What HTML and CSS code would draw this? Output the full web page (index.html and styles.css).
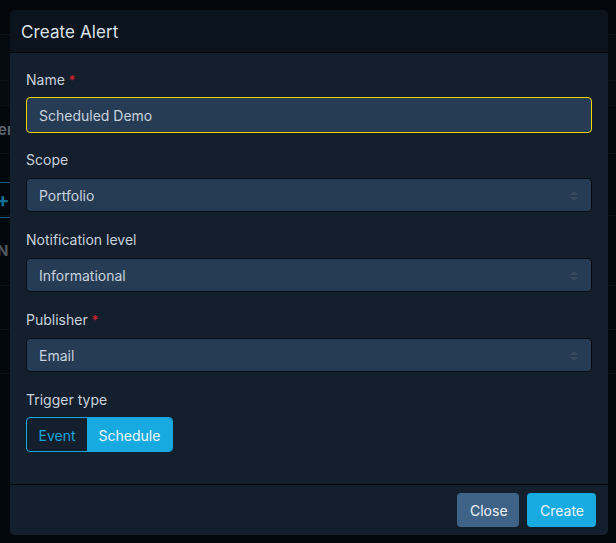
FILE: index.html
```html
<!DOCTYPE html>
<html>
<head>
<meta charset="utf-8">
<link rel="stylesheet" href="styles.css">
</head>
<body>
<div class="page">
  <div class="bg-row bg-top"></div>
  <div class="bg-row bg-nav"></div>
  <div class="bg-row bg-sub"></div>
  <div class="bg-row bg-title"><span class="bg-text">Filter</span></div>
  <div class="bg-row bg-tabs"><span class="bg-plus">+</span></div>
  <div class="bg-row bg-col"><span class="bg-n">N</span></div>
  <div class="bg-row bg-line"></div>
  <div class="bg-row bg-line"></div>
</div>

<div class="modal">
  <div class="modal-header">Create Alert</div>
  <div class="modal-body">
    <div class="field">
      <label class="label">Name <span class="req">*</span></label>
      <div class="input focused">Scheduled Demo</div>
    </div>
    <div class="field">
      <label class="label">Scope</label>
      <div class="input select">Portfolio<span class="arrows"></span></div>
    </div>
    <div class="field">
      <label class="label">Notification level</label>
      <div class="input select">Informational<span class="arrows"></span></div>
    </div>
    <div class="field">
      <label class="label">Publisher <span class="req">*</span></label>
      <div class="input select">Email<span class="arrows"></span></div>
    </div>
    <div class="field">
      <label class="label">Trigger type</label>
      <div class="toggle">
        <span class="seg">Event</span>
        <span class="seg active">Schedule</span>
      </div>
    </div>
  </div>
  <div class="modal-footer">
    <button class="btn btn-close">Close</button>
    <button class="btn btn-create">Create</button>
  </div>
</div>
</body>
</html>
```

FILE: styles.css
```css
* { box-sizing: border-box; }
html, body {
  margin: 0;
  padding: 0;
  width: 616px;
  height: 543px;
  overflow: hidden;
  background: #03080e;
  font-family: Inter, "Noto Sans", "Liberation Sans", sans-serif;
}
.page {
  display: flex;
  flex-direction: column;
}
.bg-row { width: 100%; border-bottom: 1px solid #0b1118; position: relative; }
.bg-top { height: 35px; background: #03070c; }
.bg-nav { height: 46px; background: #040a10; }
.bg-sub { height: 25px; background: #060b12; }
.bg-title { height: 48px; display: flex; align-items: center; }
.bg-text {
  color: #5d6670; font-size: 15px; margin-left: -24px; font-weight: 600;
}
.bg-tabs {
  height: 62px; display: flex; align-items: center;
  border-bottom: 1px solid #0b1118;
}
.bg-tabs::before {
  content: ""; position: absolute; left: 0; top: 28px; width: 14px; height: 34px;
  border-top: 1px solid #0f5f7d; border-bottom: 1px solid #0f5f7d;
}
.bg-plus { color: #127092; font-size: 20px; font-weight: 700; margin-left: -4px; margin-top: 30px; }
.bg-col { height: 70px; display: flex; align-items: center; }
.bg-n { color: #50575f; font-weight: 700; font-size: 15px; margin-left: -3px; }
.bg-line { height: 44px; }

.modal {
  position: absolute;
  left: 10px;
  top: 10px;
  width: 598px;
  height: 525px;
  border-radius: 5px;
  overflow: hidden;
  background: #141f2e;
  display: flex;
  flex-direction: column;
}
.modal-header {
  height: 43px;
  background: #0b141d;
  border-bottom: 1px solid #04080c;
  color: #dbe3ea;
  font-size: 17px;
  line-height: 44px;
  padding-left: 11px;
  letter-spacing: 0.1px;
}
.modal-body {
  padding: 17px 16px 14px 16px;
  flex: 1;
}
.field { margin-bottom: 18px; }
.field:last-child { margin-bottom: 0; }
.label {
  display: block;
  color: #c9d2db;
  font-size: 14px;
  line-height: 20px;
  margin-bottom: 8px;
}
.req { color: #e0242c; font-size: 13px; }
.input {
  height: 34px;
  border: 1px solid #070c12;
  border-radius: 4px;
  background: #263c55;
  color: #c8d2dd;
  font-size: 14px;
  line-height: 34px;
  padding-left: 12px;
  position: relative;
}
.input.focused {
  border-color: #f2d500;
  height: 36px;
  line-height: 36px;
  margin-top: -1px;
  margin-bottom: -1px;
}
.arrows {
  position: absolute;
  right: 13px;
  top: 12px;
  width: 8px;
  height: 10px;
}
.arrows::before, .arrows::after {
  content: "";
  position: absolute;
  left: 0;
  border-left: 4px solid transparent;
  border-right: 4px solid transparent;
}
.arrows::before { top: 0; border-bottom: 4px solid #3d4a5a; }
.arrows::after { bottom: 0; border-top: 4px solid #3d4a5a; }

.toggle {
  display: inline-flex;
  height: 35px;
  margin-top: -1px;
  border: 1px solid #17a8df;
  border-radius: 4px;
  overflow: hidden;
}
.seg {
  display: flex;
  align-items: center;
  padding: 1px 11.5px 0;
  color: #19a6dc;
  font-size: 14px;
}
.seg.active { background: #17aae1; color: #f1f8fc; }

.modal-footer {
  height: 51px;
  border-top: 1px solid #04080c;
  display: flex;
  justify-content: flex-end;
  align-items: flex-start;
  gap: 8px;
  padding: 8px 12px 0 0;
}
.btn {
  height: 34px;
  border: none;
  border-radius: 4px;
  font-family: inherit;
  font-size: 14px;
  color: #eef3f7;
  padding: 0 13px;
}
.btn-close { background: #3e6387; width: 62px; }
.btn-create { background: #17abe1; width: 69px; }
```
